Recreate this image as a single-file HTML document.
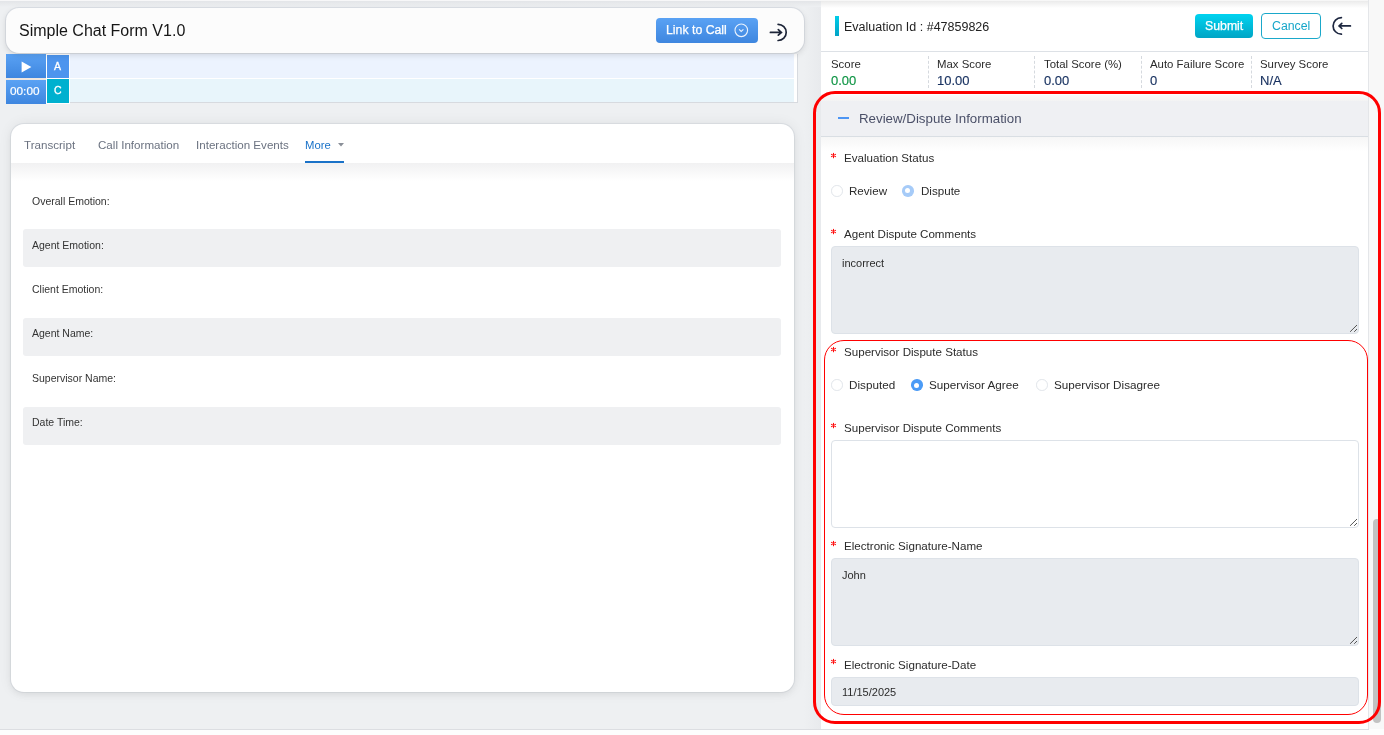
<!DOCTYPE html>
<html><head><meta charset="utf-8"><style>
*{box-sizing:border-box;margin:0;padding:0}
html,body{width:1384px;height:735px;overflow:hidden;background:#fdfdfd;font-family:"Liberation Sans",sans-serif;color:#2b2b2b}
.a{position:absolute}
.t{position:absolute;line-height:1;white-space:nowrap;will-change:transform}
</style></head><body>
<div class="a" style="left:0;top:0;width:821px;height:729px;background:#eef0f2"></div>
<div class="a" style="left:804px;top:0;width:17px;height:729px;background:linear-gradient(90deg,#eef0f2,#e8eaed)"></div>
<div class="a" style="left:0;top:0;width:821px;height:1px;background:#f7f7f8"></div>
<div class="a" style="left:0;top:1px;width:821px;height:6px;background:linear-gradient(#e3e5e8,#eef0f2)"></div>
<div class="a" style="left:0;top:729px;width:1369px;height:1px;background:#dcdee2"></div>
<div class="a" style="left:46px;top:54px;width:24px;height:50px;background:#fff"></div>
<div class="a" style="left:70px;top:54px;width:728px;height:49px;background:#fff"></div>
<div class="a" style="left:797px;top:54px;width:1px;height:49px;background:#d7dadf"></div>
<div class="a" style="left:70px;top:102px;width:728px;height:1px;background:#d7dadf"></div>
<div class="a" style="left:70px;top:54px;width:724px;height:24px;background:#ecf3fe"></div>
<div class="a" style="left:70px;top:79px;width:724px;height:23px;background:#e8f5fb"></div>
<div class="a" style="left:6px;top:54px;width:40px;height:24px;background:linear-gradient(#5aa2f4,#3e86df)"></div>
<div class="a" style="left:6px;top:78px;width:40px;height:2px;background:#eee6df"></div>
<div class="a" style="left:6px;top:80px;width:40px;height:24px;background:linear-gradient(#5aa2f4,#3e86df)"></div>
<svg class="a" style="left:21px;top:61px" width="11" height="12" viewBox="0 0 11 12"><path d="M0.6 0.4 L10.4 6 L0.6 11.6 Z" fill="#fff"/></svg>
<div class="t" style="left:9.5px;top:86.31px;font-size:11.8px;color:#fff;-webkit-text-stroke:0.2px #fff">00:00</div>

<div class="a" style="left:47px;top:55px;width:22px;height:23px;background:#4d95ee"></div>
<div class="a" style="left:47px;top:79px;width:22px;height:24px;background:#00b0cf"></div>
<div class="t" style="left:54px;top:61.41px;font-size:10.5px;color:#fff;-webkit-text-stroke:0.3px #fff">A</div>

<div class="t" style="left:53.8px;top:85.21px;font-size:10.5px;color:#fff;-webkit-text-stroke:0.3px #fff">C</div>

<div class="a" style="left:6px;top:8px;width:798px;height:45px;background:#fcfcfc;border-radius:13px;box-shadow:0 2px 6px rgba(0,0,0,.13),0 0 0 1px rgba(40,70,110,.08)"></div>
<div class="t" style="left:19px;top:23.46px;font-size:16px;color:#161616;">Simple Chat Form V1.0</div>

<div class="a" style="left:656px;top:18px;width:102px;height:25px;border-radius:4px;background:linear-gradient(#5aa2f4,#3e86df)"></div>
<div class="t" style="left:666px;top:24.19px;font-size:12.3px;color:#ffffff;-webkit-text-stroke:0.25px #fff">Link to Call</div>

<svg class="a" style="left:733px;top:22px" width="16" height="16" viewBox="0 0 16 16"><circle cx="8.3" cy="8.3" r="6.3" fill="none" stroke="#e9f2fd" stroke-width="1.1"/><path d="M6.1 7.4 L8.2 9.5 L10.4 7.3" fill="none" stroke="#e9f2fd" stroke-width="1.1"/></svg>
<svg class="a" style="left:768px;top:22px" width="22" height="22" viewBox="0 0 22 22"><path d="M10.1 2.3 A8.1 8.1 0 0 1 10.1 18.5" fill="none" stroke="#1d2538" stroke-width="1.7" stroke-linecap="round"/><path d="M2.4 10.4 H13.4 M10.3 7.6 L13.4 10.4 L10.3 13.2" fill="none" stroke="#1d2538" stroke-width="1.7" stroke-linecap="round"/></svg>
<div class="a" style="left:11px;top:124px;width:783px;height:568px;background:#fff;border-radius:13px;box-shadow:0 0 14px rgba(0,0,0,.07),0 3px 6px rgba(0,0,0,.05),0 0 0 1px rgba(40,70,110,.07)"></div>
<div class="a" style="left:11px;top:163px;width:783px;height:18px;background:linear-gradient(#f1f1f2,#ffffff)"></div>
<div class="t" style="left:24px;top:139.18px;font-size:11.6px;color:#6b7280;">Transcript</div>

<div class="t" style="left:98px;top:139.18px;font-size:11.6px;color:#6b7280;">Call Information</div>

<div class="t" style="left:196px;top:139.18px;font-size:11.6px;color:#6b7280;">Interaction Events</div>

<div class="t" style="left:305px;top:140.43px;font-size:11.3px;color:#1a72c8;">More</div>

<svg class="a" style="left:338px;top:142.7px" width="6" height="4" viewBox="0 0 6 4"><path d="M0 0 H6 L3 3.5 Z" fill="#8a8f98"/></svg>
<div class="a" style="left:305px;top:161px;width:39px;height:2px;background:#1a72c8"></div>
<div class="t" style="left:32px;top:195.51px;font-size:10.5px;color:#333;">Overall Emotion:</div>

<div class="a" style="left:23px;top:229px;width:758px;height:38px;background:#eff0f2;border-radius:3px"></div>
<div class="t" style="left:32px;top:239.61px;font-size:10.5px;color:#333;">Agent Emotion:</div>

<div class="t" style="left:32px;top:284.11px;font-size:10.5px;color:#333;">Client Emotion:</div>

<div class="a" style="left:23px;top:318px;width:758px;height:38px;background:#eff0f2;border-radius:3px"></div>
<div class="t" style="left:32px;top:328.41px;font-size:10.5px;color:#333;">Agent Name:</div>

<div class="t" style="left:32px;top:373.11px;font-size:10.5px;color:#333;">Supervisor Name:</div>

<div class="a" style="left:23px;top:407px;width:758px;height:38px;background:#eff0f2;border-radius:3px"></div>
<div class="t" style="left:32px;top:417.41px;font-size:10.5px;color:#333;">Date Time:</div>

<div class="a" style="left:821px;top:0;width:547px;height:729px;background:#fff"></div>
<div class="a" style="left:821px;top:0;width:547px;height:1px;background:#f7f7f7"></div>
<div class="a" style="left:821px;top:1px;width:547px;height:7px;background:linear-gradient(#ebebeb,#fff)"></div>
<div class="a" style="left:1368px;top:0;width:1px;height:729px;background:#e4e6e9"></div>
<div class="a" style="left:1369px;top:0;width:15px;height:729px;background:#f8f8f8"></div>
<div class="a" style="left:1373px;top:519px;width:8px;height:204px;background:#c2c2c2;border-radius:4px"></div>
<div class="a" style="left:835px;top:16px;width:4px;height:20px;background:linear-gradient(#00cde9,#00a3c6)"></div>
<div class="t" style="left:844.3px;top:20.82px;font-size:12.5px;color:#222;">Evaluation Id : #47859826</div>

<div class="a" style="left:1195px;top:14px;width:58px;height:24px;border-radius:4px;background:linear-gradient(#00d3f0,#00a5c5)"></div>
<div class="t" style="left:1204.6px;top:19.99px;font-size:12.3px;color:#fff;-webkit-text-stroke:0.25px #fff">Submit</div>

<div class="a" style="left:1261px;top:13px;width:60px;height:26px;border-radius:4px;border:1px solid #1aa8ca;background:#fff"></div>
<div class="t" style="left:1272px;top:19.99px;font-size:12.3px;color:#16a6c9;">Cancel</div>

<svg class="a" style="left:1330px;top:15px" width="24" height="22" viewBox="0 0 24 22"><path d="M11.4 2.6 A8.3 8.3 0 0 0 11.4 19.2" fill="none" stroke="#1d2740" stroke-width="1.7" stroke-linecap="round"/><path d="M20.4 10.9 H9.2 M11.8 8.3 L9.1 10.9 L11.8 13.5" fill="none" stroke="#1d2740" stroke-width="1.7" stroke-linecap="round"/></svg>
<div class="a" style="left:821px;top:51px;width:547px;height:1px;background:#dde1e6"></div>
<div class="t" style="left:831px;top:59.35px;font-size:11.4px;color:#2b2b2b;">Score</div>

<div class="t" style="left:831px;top:73.90px;font-size:13px;color:#0e9444;-webkit-text-stroke:0.15px #0e9444">0.00</div>

<div class="t" style="left:937px;top:59.35px;font-size:11.4px;color:#2b2b2b;">Max Score</div>

<div class="t" style="left:937px;top:73.90px;font-size:13px;color:#16305f;-webkit-text-stroke:0.15px #16305f">10.00</div>

<div class="t" style="left:1044px;top:59.35px;font-size:11.4px;color:#2b2b2b;">Total Score (%)</div>

<div class="t" style="left:1044px;top:73.90px;font-size:13px;color:#16305f;-webkit-text-stroke:0.15px #16305f">0.00</div>

<div class="t" style="left:1150px;top:59.35px;font-size:11.4px;color:#2b2b2b;">Auto Failure Score</div>

<div class="t" style="left:1150px;top:73.90px;font-size:13px;color:#16305f;-webkit-text-stroke:0.15px #16305f">0</div>

<div class="t" style="left:1260px;top:59.35px;font-size:11.4px;color:#2b2b2b;">Survey Score</div>

<div class="t" style="left:1260px;top:73.90px;font-size:13px;color:#16305f;-webkit-text-stroke:0.15px #16305f">N/A</div>

<div class="a" style="left:928px;top:56px;width:0;height:32px;border-left:1px dashed #d5d9de"></div>
<div class="a" style="left:1034px;top:56px;width:0;height:32px;border-left:1px dashed #d5d9de"></div>
<div class="a" style="left:1141px;top:56px;width:0;height:32px;border-left:1px dashed #d5d9de"></div>
<div class="a" style="left:1251px;top:56px;width:0;height:32px;border-left:1px dashed #d5d9de"></div>
<div class="a" style="left:821px;top:95px;width:547px;height:6px;background:linear-gradient(#fafafa,#f3f3f3)"></div>
<div class="a" style="left:821px;top:101px;width:547px;height:36px;background:#eff0f3;border-bottom:1px solid #d9dee3"></div>
<div class="a" style="left:838px;top:117.3px;width:11px;height:2px;background:#4d95f3"></div>
<div class="t" style="left:859px;top:111.84px;font-size:13.3px;color:#4b5068;">Review/Dispute Information</div>

<div class="a" style="left:821px;top:137px;width:547px;height:14px;background:linear-gradient(#f6f6f6,#fff)"></div>
<div class="t" style="left:843.8px;top:152.28px;font-size:11.6px;color:#2b2b2b;">Evaluation Status</div>
<svg class="a" style="left:829px;top:151px" width="8" height="8" viewBox="-4.5 -4.5 8 8"><path d="M0 -2.3 V2.3 M-2.05 -1.15 L2.05 1.15 M-2.05 1.15 L2.05 -1.15" stroke="#ff0a0a" stroke-width="1.05" stroke-linecap="round"/></svg>
<div class="a" style="left:831px;top:185.05px;width:11.5px;height:11.5px;border-radius:50%;border:1px solid #e1e5ea;background:#fff"></div>
<div class="t" style="left:849.2px;top:185.18px;font-size:11.6px;color:#2b2b2b;">Review</div>

<div class="a" style="left:902px;top:185.05px;width:11.5px;height:11.5px;border-radius:50%;background:#a6cbf8"></div><div class="a" style="left:905.25px;top:188.3px;width:5px;height:5px;border-radius:50%;background:#fff"></div>
<div class="t" style="left:920.5px;top:185.18px;font-size:11.6px;color:#2b2b2b;">Dispute</div>

<div class="t" style="left:843.8px;top:228.38px;font-size:11.6px;color:#2b2b2b;">Agent Dispute Comments</div>
<svg class="a" style="left:829px;top:227px" width="8" height="8" viewBox="-4.5 -4.5 8 8"><path d="M0 -2.3 V2.3 M-2.05 -1.15 L2.05 1.15 M-2.05 1.15 L2.05 -1.15" stroke="#ff0a0a" stroke-width="1.05" stroke-linecap="round"/></svg>
<div class="a" style="left:831px;top:246px;width:528px;height:88px;border-radius:4px;border:1px solid #dde2e8;background:#e8ebef"></div><svg class="a" style="left:1349px;top:324px" width="8" height="8" viewBox="0 0 8 8"><path d="M1.1 7.8 L8 1 M5.2 7.8 L8 5" stroke="#4a4a4a" stroke-width="0.95"/></svg>
<div class="t" style="left:841.5px;top:258.19px;font-size:11px;color:#2b2b2b;">incorrect</div>

<div class="t" style="left:843.8px;top:346.48px;font-size:11.6px;color:#2b2b2b;">Supervisor Dispute Status</div>
<svg class="a" style="left:829px;top:345px" width="8" height="8" viewBox="-4.5 -4.5 8 8"><path d="M0 -2.3 V2.3 M-2.05 -1.15 L2.05 1.15 M-2.05 1.15 L2.05 -1.15" stroke="#ff0a0a" stroke-width="1.05" stroke-linecap="round"/></svg>
<div class="a" style="left:831px;top:379.25px;width:11.5px;height:11.5px;border-radius:50%;border:1px solid #e1e5ea;background:#fff"></div>
<div class="t" style="left:849px;top:379.10px;font-size:11.7px;color:#2b2b2b;">Disputed</div>

<div class="a" style="left:911px;top:379.25px;width:11.5px;height:11.5px;border-radius:50%;background:#4b9bf6"></div><div class="a" style="left:914.25px;top:382.5px;width:5px;height:5px;border-radius:50%;background:#fff"></div>
<div class="t" style="left:929.2px;top:379.10px;font-size:11.7px;color:#2b2b2b;">Supervisor Agree</div>

<div class="a" style="left:1036px;top:379.25px;width:11.5px;height:11.5px;border-radius:50%;border:1px solid #e1e5ea;background:#fff"></div>
<div class="t" style="left:1054px;top:379.10px;font-size:11.7px;color:#2b2b2b;">Supervisor Disagree</div>

<div class="t" style="left:843.8px;top:422.18px;font-size:11.6px;color:#2b2b2b;">Supervisor Dispute Comments</div>
<svg class="a" style="left:829px;top:421px" width="8" height="8" viewBox="-4.5 -4.5 8 8"><path d="M0 -2.3 V2.3 M-2.05 -1.15 L2.05 1.15 M-2.05 1.15 L2.05 -1.15" stroke="#ff0a0a" stroke-width="1.05" stroke-linecap="round"/></svg>
<div class="a" style="left:831px;top:440px;width:528px;height:88px;border-radius:4px;border:1px solid #dde2e8;background:#fff"></div><svg class="a" style="left:1349px;top:518px" width="8" height="8" viewBox="0 0 8 8"><path d="M1.1 7.8 L8 1 M5.2 7.8 L8 5" stroke="#4a4a4a" stroke-width="0.95"/></svg>
<div class="t" style="left:843.8px;top:540.08px;font-size:11.6px;color:#2b2b2b;">Electronic Signature-Name</div>
<svg class="a" style="left:829px;top:539px" width="8" height="8" viewBox="-4.5 -4.5 8 8"><path d="M0 -2.3 V2.3 M-2.05 -1.15 L2.05 1.15 M-2.05 1.15 L2.05 -1.15" stroke="#ff0a0a" stroke-width="1.05" stroke-linecap="round"/></svg>
<div class="a" style="left:831px;top:558px;width:528px;height:88px;border-radius:4px;border:1px solid #dde2e8;background:#e8ebef"></div><svg class="a" style="left:1349px;top:636px" width="8" height="8" viewBox="0 0 8 8"><path d="M1.1 7.8 L8 1 M5.2 7.8 L8 5" stroke="#4a4a4a" stroke-width="0.95"/></svg>
<div class="t" style="left:841.8px;top:570.49px;font-size:11px;color:#2b2b2b;">John</div>

<div class="t" style="left:843.8px;top:658.68px;font-size:11.6px;color:#2b2b2b;">Electronic Signature-Date</div>
<svg class="a" style="left:829px;top:657px" width="8" height="8" viewBox="-4.5 -4.5 8 8"><path d="M0 -2.3 V2.3 M-2.05 -1.15 L2.05 1.15 M-2.05 1.15 L2.05 -1.15" stroke="#ff0a0a" stroke-width="1.05" stroke-linecap="round"/></svg>
<div class="a" style="left:831px;top:677px;width:528px;height:29px;border-radius:4px;border:1px solid #dde2e8;background:#e8ebef"></div>
<div class="t" style="left:841.5px;top:686.69px;font-size:11px;color:#2b2b2b;">11/15/2025</div>

<div class="a" style="left:813px;top:91px;width:568px;height:633px;border:3px solid #ff0000;border-radius:22px"></div>
<div class="a" style="left:824px;top:340px;width:544px;height:375px;border:1px solid #ff0000;border-radius:20px"></div>
</body></html>
